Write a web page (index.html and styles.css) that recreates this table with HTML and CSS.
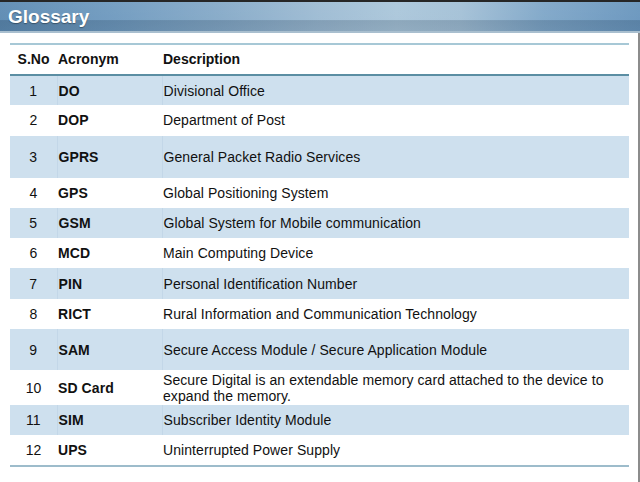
FILE: index.html
```html
<!DOCTYPE html>
<html>
<head>
<meta charset="utf-8">
<link rel="stylesheet" href="styles.css">
</head>
<body>
<div class="page">
  <header class="titlebar"><h1 class="title">Glossary</h1></header>
  <main class="content">
    <table class="glossary">
      <colgroup><col class="c-no"><col class="c-acr"><col class="c-desc"></colgroup>
      <thead>
        <tr><th class="no">S.No</th><th>Acronym</th><th>Description</th></tr>
      </thead>
      <tbody>
        <tr class="shade"><td class="no">1</td><td class="acr">DO</td><td>Divisional Office</td></tr>
        <tr><td class="no">2</td><td class="acr">DOP</td><td>Department of Post</td></tr>
        <tr class="shade h42"><td class="no">3</td><td class="acr">GPRS</td><td>General Packet Radio Services</td></tr>
        <tr><td class="no">4</td><td class="acr">GPS</td><td>Global Positioning System</td></tr>
        <tr class="shade"><td class="no">5</td><td class="acr">GSM</td><td>Global System for Mobile communication</td></tr>
        <tr><td class="no">6</td><td class="acr">MCD</td><td>Main Computing Device</td></tr>
        <tr class="shade"><td class="no">7</td><td class="acr">PIN</td><td>Personal Identification Number</td></tr>
        <tr><td class="no">8</td><td class="acr">RICT</td><td>Rural Information and Communication Technology</td></tr>
        <tr class="shade h41"><td class="no">9</td><td class="acr">SAM</td><td>Secure Access Module / Secure Application Module</td></tr>
        <tr class="h35"><td class="no">10</td><td class="acr">SD Card</td><td class="wrap">Secure Digital is an extendable memory card attached to the device to expand the memory.</td></tr>
        <tr class="shade"><td class="no">11</td><td class="acr">SIM</td><td>Subscriber Identity Module</td></tr>
        <tr><td class="no">12</td><td class="acr">UPS</td><td>Uninterrupted Power Supply</td></tr>
      </tbody>
    </table>
  </main>
</div>
</body>
</html>
```
FILE: styles.css
```css
html, body {
  margin: 0;
  padding: 0;
  background: #ffffff;
}
.page {
  width: 640px;
  height: 482px;
  box-sizing: border-box;
  border-top: 2px solid #262626;
  font-family: "Liberation Sans", Arial, sans-serif;
  color: #111;
  overflow: hidden;
}
.titlebar {
  height: 31px;
  box-sizing: border-box;
  border-bottom: 2px solid #a9bfcf;
  background:
    linear-gradient(180deg, rgba(255,255,255,0.06) 0%, rgba(255,255,255,0.04) 62%, rgba(40,60,80,0.22) 64%, rgba(40,60,80,0.18) 100%),
    linear-gradient(90deg, #5c8ab2 0%, #6f9abf 18%, #86aac8 35%, #9dbbd3 50%, #aac6da 62%, #a3c0d6 72%, #7ea6c8 85%, #6895bd 100%);
  display: flex;
  align-items: center;
  padding-left: 8px;
}
.title {
  margin: 0;
  font-family: "Liberation Sans Narrow", "Liberation Sans", Arial, sans-serif;
  font-stretch: condensed;
  font-weight: bold;
  font-size: 19px;
  color: #ffffff;
  text-shadow: 0 1px 1px rgba(0,0,0,0.35);
  line-height: 1;
  margin-top: -1px;
}
.content {
  height: 449px;
  box-sizing: border-box;
  padding: 10px 0 0 10px;
  border-right: 2px solid #8c8c8c;
}
.glossary {
  width: 619px;
  border-collapse: collapse;
  table-layout: fixed;
  font-size: 14px;
}
.c-no { width: 47px; }
.c-acr { width: 105px; }
.c-desc { width: 467px; }
.glossary thead tr {
  height: 31px;
  border-top: 2px solid #a7c8d6;
  border-bottom: 2px solid #5b8ea3;
}
.glossary th {
  text-align: left;
  font-weight: bold;
  padding: 0 0 2px 1px;
  vertical-align: middle;
}
.glossary th.no { text-align: center; padding: 0 0 2px 0; }
.glossary tbody tr { height: 30.3px; }
.glossary tbody tr:last-child { border-bottom: 2px solid #9dbccb; }
.glossary td {
  padding: 0 0 0 1px;
  vertical-align: middle;
  line-height: 16px;
  letter-spacing: 0.08px;
}
.glossary td.no { text-align: center; padding: 0; }
.glossary td.acr { font-weight: bold; }
.glossary tr.shade { background: #cee0ee; }
.glossary tr.shade td + td { border-left: 1px solid #c3d7e8; }
.glossary tr.h42 { height: 42px; }
.glossary tr.h41 { height: 41px; }
.glossary tr.h35 { height: 35px; }
.glossary td.wrap { padding-right: 20px; }
```
